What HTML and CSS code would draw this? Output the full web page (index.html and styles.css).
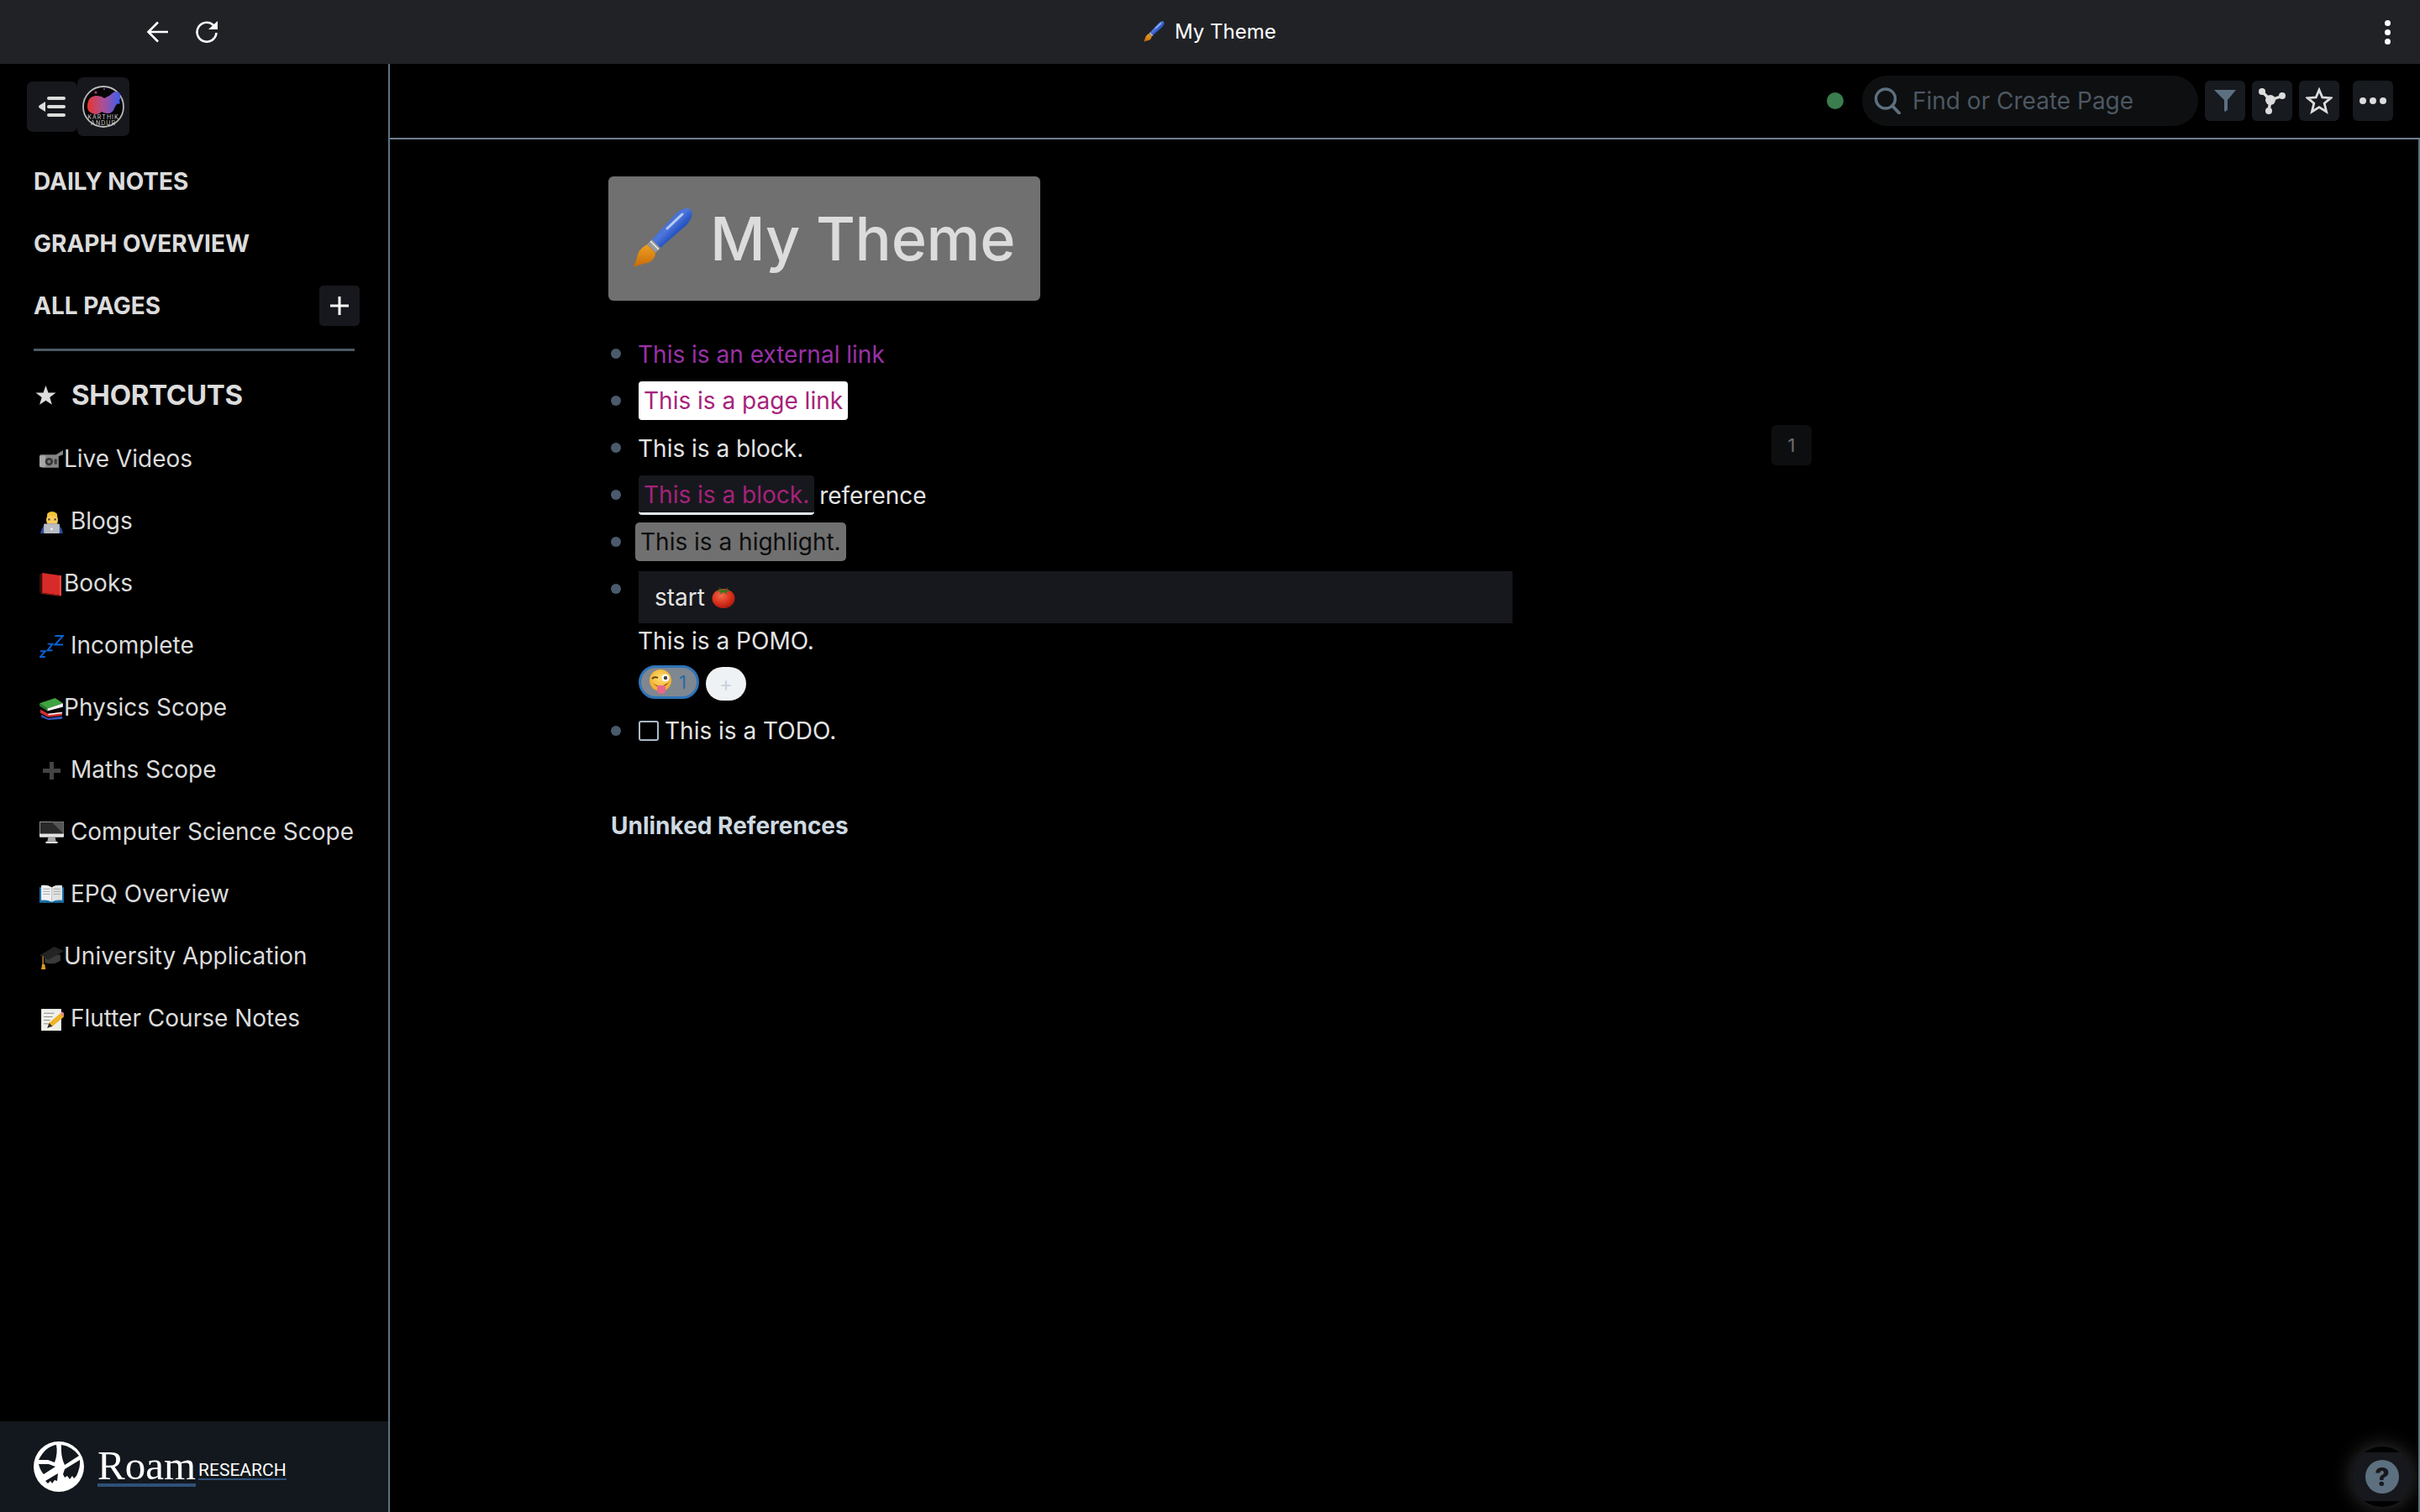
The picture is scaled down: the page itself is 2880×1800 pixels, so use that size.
FILE: index.html
```html
<!DOCTYPE html>
<html lang="en">
<head>
<meta charset="utf-8">
<title>My Theme</title>
<link rel="stylesheet" href="styles.css">
</head>
<body>
<svg class="defs" width="0" height="0" aria-hidden="true">
  <defs>
    <linearGradient id="g-handle" x1="0" y1="0" x2="1" y2="1">
      <stop offset="0" stop-color="#1d3fa8"/><stop offset=".45" stop-color="#4f78dc"/><stop offset=".6" stop-color="#2a56c4"/><stop offset="1" stop-color="#16368f"/>
    </linearGradient>
    <linearGradient id="g-tip" x1="0" y1="0" x2="0" y2="1">
      <stop offset="0" stop-color="#f0a020"/><stop offset="1" stop-color="#c86a08"/>
    </linearGradient>
    <radialGradient id="g-tomato" cx=".4" cy=".35" r=".7">
      <stop offset="0" stop-color="#f36a4a"/><stop offset=".6" stop-color="#d8301c"/><stop offset="1" stop-color="#a5180e"/>
    </radialGradient>
    <radialGradient id="g-face" cx=".5" cy=".4" r=".65">
      <stop offset="0" stop-color="#ffe070"/><stop offset="1" stop-color="#f0a420"/>
    </radialGradient>
    <linearGradient id="g-blob" x1="0" y1="0" x2="1" y2="0">
      <stop offset="0" stop-color="#e8352f"/><stop offset=".45" stop-color="#b04f90"/><stop offset="1" stop-color="#3f5df0"/>
    </linearGradient>

    <symbol id="e-brush" viewBox="0 0 70 72">
      <path d="M22 38 L46 12 Q56 0 65 1 Q71 3 69 11 Q66 20 56 27 L32 48 Z" fill="url(#g-handle)"/>
      <path d="M40 25 L58 8" stroke="#b8cbf5" stroke-width="3" stroke-linecap="round" fill="none"/>
      <path d="M21.800 38.200 L31.800 48.200 L26.200 53.800 L16.200 43.800 Z" fill="#9a9a9a"/>
      <path d="M20 40 L30 50" stroke="#eee" stroke-width="1.500"/>
      <path d="M16 44 Q6 50 5 56 Q3 64 0 71 Q10 67 17 66 Q26 62 26 54 Z" fill="url(#g-tip)"/>
    </symbol>
    <symbol id="e-camera" viewBox="0 0 28 26">
      <path d="M1 7 H19 L27 2 V7 L22 9 V22 H3 Q1 22 1 20 Z" fill="#858585"/>
      <rect x="0" y="8" width="7" height="13" fill="#a8a8a8"/>
      <circle cx="11" cy="15" r="4.500" fill="#333"/><circle cx="11" cy="15" r="2" fill="#777"/>
      <rect x="17" y="12" width="3" height="6" fill="#3b3b3b"/>
    </symbol>
    <symbol id="e-coder" viewBox="0 0 28 28">
      <path d="M9 4 Q14 0 20 4 L21 12 H8 Z" fill="#f2c23a"/>
      <rect x="8" y="7" width="13" height="10" rx="4" fill="#fbcb5c"/>
      <path d="M1 27 Q3 17 10 16 H18 Q25 17 27 27 Z" fill="#2a4fa0"/>
      <rect x="5" y="16" width="18" height="11" rx="1" fill="#b9bcc2"/>
      <circle cx="14" cy="22" r="1.200" fill="#fff"/>
      <rect x="10" y="10" width="2" height="2" fill="#333"/><rect x="17" y="10" width="2" height="2" fill="#333"/>
    </symbol>
    <symbol id="e-book" viewBox="0 0 28 28">
      <path d="M3 1 L25 4 V27 L3 24 Z" fill="#d62b28"/>
      <path d="M3 1 L0 3 V24 L3 24 Z" fill="#3a0d0d"/>
      <path d="M3 24 L25 27 L24 28 L1 25 Z" fill="#7e1413"/>
      <path d="M23 4 H25 V27 H23 Z" fill="#f24a43"/>
    </symbol>
    <symbol id="e-zzz" viewBox="0 0 30 30">
      <g fill="none" stroke="#0a63d6" stroke-width="2">
        <path d="M19 2 H29 L19 13 H29"/>
        <path d="M10 12 H16 L10 20 H16"/>
        <path d="M1 21 H7 L1 28 H7"/>
      </g>
    </symbol>
    <symbol id="e-books" viewBox="0 0 28 26">
      <path d="M2 20 L10 24 L26 22 V25 L10 26 L2 23 Z" fill="#3457c0"/>
      <path d="M1 14 L10 19 L26 17 V21 L10 23 L1 18 Z" fill="#d13030"/>
      <path d="M10 19 L26 17 V18.500 L10 20.500 Z" fill="#fff"/>
      <path d="M0 7 L18 1 L27 7 L9 13 Z" fill="#3fa33f"/>
      <path d="M9 13 L27 7 V11 L9 16 Z" fill="#f4f4f4"/>
      <path d="M0 7 L9 13 V16 L0 10 Z" fill="#2a7a2a"/>
    </symbol>
    <symbol id="e-plus" viewBox="0 0 29 29">
      <path d="M12 4 H17 V12 H25 V17 H17 V25 H12 V17 H4 V12 H12 Z" fill="#444"/>
    </symbol>
    <symbol id="e-monitor" viewBox="0 0 28 26">
      <rect x="0" y="0" width="28" height="18" rx="1" fill="#e4e4e4"/>
      <path d="M0.500 .5 H27.500 V14 H0.500 Z" fill="#2a2a2a"/>
      <path d="M14 .5 H27.500 V14 Z" fill="#555"/>
      <path d="M10 18 H18 L19 23 H9 Z" fill="#a8a8a8"/>
      <rect x="7" y="23" width="14" height="2" rx="1" fill="#ddd"/>
    </symbol>
    <symbol id="e-openbook" viewBox="0 0 28 24">
      <path d="M0 3 H13 L14 5 L15 3 H28 V21 H0 Z" fill="#1b6fa8"/>
      <path d="M2 1 Q9 0 14 3 V20 Q9 17 2 18 Z" fill="#f2f2f2"/>
      <path d="M26 1 Q19 0 14 3 V20 Q19 17 26 18 Z" fill="#e2e2e2"/>
      <path d="M4 5 H12 M4 8 H12 M4 11 H12 M16 5 H24 M16 8 H24 M16 11 H24" stroke="#9a9a9a" stroke-width=".8"/>
    </symbol>
    <symbol id="e-cap" viewBox="0 0 28 28">
      <path d="M6 12 V20 Q15 24 24 18 V11 Z" fill="#3a3a3a"/>
      <path d="M0 12 L17 2 L28 7 L10 17 Z" fill="#242424"/>
      <path d="M4 13 V22" stroke="#c98a22" stroke-width="1.400"/>
      <path d="M3 22 H6 L7 28 H2 Z" fill="#dd9a2a"/>
    </symbol>
    <symbol id="e-memo" viewBox="0 0 28 28">
      <rect x="2" y="2" width="23" height="25" fill="#f0f0ea"/>
      <path d="M5 7 H17 M5 11 H15 M5 15 H12 M5 19 H10" stroke="#8a8a8a" stroke-width="1"/>
      <path d="M9 24 L11 18 L24 7 L28 11 L15 22 Z" fill="#f0b428"/>
      <path d="M24 7 L26 5 L28 7 L28 11 Z" fill="#e88a96"/>
      <path d="M9 24 L11 18 L15 22 Z" fill="#333"/>
    </symbol>
    <symbol id="e-tomato" viewBox="0 0 28 26">
      <ellipse cx="14" cy="14.500" rx="13.500" ry="11.500" fill="url(#g-tomato)"/>
      <path d="M14 5 L8 1 L11 5 L5 5 L11 7 L9 10 L14 7 L19 10 L17 7 L23 5 L17 5 L20 1 Z" fill="#2f7a1f"/>
    </symbol>
    <symbol id="e-wink" viewBox="0 0 28 30">
      <circle cx="14" cy="13" r="13" fill="url(#g-face)"/>
      <path d="M4 11 Q7 8 11 10" fill="none" stroke="#5a3a10" stroke-width="1.800"/>
      <circle cx="20" cy="10" r="4.500" fill="#fff"/><circle cx="20" cy="10" r="2.200" fill="#444"/>
      <path d="M5 16 Q14 24 24 15 Q20 21 14 21 Q9 21 5 16 Z" fill="#6a3a14"/>
      <path d="M10 19 H20 V25 Q20 29 15 29 Q10 29 10 25 Z" fill="#e8688c"/>
    </symbol>
  </defs>
</svg>

<div class="app">
  <header class="titlebar">
    <div class="nav-icons">
      <svg class="nav-icon" viewBox="0 0 28 28"><path d="M26 14 H3 M14 2.500 L2.500 14 L14 25.500" fill="none" stroke="#fff" stroke-width="2.600"/></svg>
      <svg class="nav-icon" viewBox="0 0 28 28"><path d="M23 7 A11.500 11.500 0 1 0 25.500 15" fill="none" stroke="#fff" stroke-width="2.600"/><path d="M27 1 V11 H16 Z" fill="#fff"/></svg>
    </div>
    <div class="tab-title">
      <svg class="tab-emoji"><use href="#e-brush"/></svg>
      <span>My Theme</span>
    </div>
    <div class="kebab"><i></i><i></i><i></i></div>
  </header>

  <div class="body">
    <aside class="sidebar">
      <div class="side-top">
        <div class="toggle">
          <svg viewBox="0 0 32 24" class="toggle-icon"><path d="M0 12 Q0 11 1.500 10 L8 6 V18 L1.500 14 Q0 13 0 12 Z" fill="#dcdcdc"/><rect x="10" y="0" width="22" height="4" rx="2" fill="#dcdcdc"/><rect x="10" y="10" width="22" height="4" rx="2" fill="#dcdcdc"/><rect x="10" y="20" width="22" height="4" rx="2" fill="#dcdcdc"/></svg>
        </div>
        <div class="avatar-btn">
          <svg class="avatar" viewBox="0 0 50 50">
            <circle cx="25" cy="25" r="24" fill="#050505" stroke="#b8b8b8" stroke-width="1.800"/>
            <path d="M6 25 Q6 13 16 12 Q23 12 26 15 Q33 12 37 8 Q42 5 45 10 Q46 17 42 21 Q39 24 38 27 Q36 33 30 33 Q26 33 23 31 Q18 36 12 33 Q6 31 6 25 Z" fill="url(#g-blob)"/>
            <circle cx="16" cy="8" r="1.600" fill="#b03a80"/><circle cx="26" cy="4" r="1" fill="#9a48b0"/><circle cx="43" cy="20" r="1.800" fill="#3f5df0"/>
            <text x="25" y="40" class="avatar-text">KARTHIK</text>
            <text x="25" y="47" class="avatar-text">ANDUR</text>
          </svg>
        </div>
      </div>

      <nav class="side-nav">
        <div class="side-link">DAILY NOTES</div>
        <div class="side-link">GRAPH OVERVIEW</div>
        <div class="side-link side-link-action">
          <span>ALL PAGES</span>
          <span class="add-btn"><svg viewBox="0 0 24 24" class="add-icon"><path d="M12 1 V23 M1 12 H23" stroke="#fff" stroke-width="3"/></svg></span>
        </div>
      </nav>
      <div class="side-rule"></div>

      <div class="shortcuts-head">
        <svg viewBox="0 0 26 26" class="head-star"><path d="M13 1 L16.100 9.800 L25.500 10 L18 15.700 L20.700 24.800 L13 19.400 L5.300 24.800 L8 15.700 L0.500 10 L9.900 9.800 Z" fill="#dcdcdc"/></svg>
        <span>SHORTCUTS</span>
      </div>

      <ul class="shortcuts">
        <li><svg class="em"><use href="#e-camera"/></svg>Live Videos</li>
        <li><svg class="em"><use href="#e-coder"/></svg> Blogs</li>
        <li><svg class="em"><use href="#e-book"/></svg>Books</li>
        <li><svg class="em"><use href="#e-zzz"/></svg> Incomplete</li>
        <li><svg class="em"><use href="#e-books"/></svg>Physics Scope</li>
        <li><svg class="em"><use href="#e-plus"/></svg> Maths Scope</li>
        <li><svg class="em"><use href="#e-monitor"/></svg> Computer Science Scope</li>
        <li><svg class="em"><use href="#e-openbook"/></svg> EPQ Overview</li>
        <li><svg class="em"><use href="#e-cap"/></svg>University Application</li>
        <li><svg class="em"><use href="#e-memo"/></svg> Flutter Course Notes</li>
      </ul>

      <footer class="side-foot">
        <svg class="roam-logo" viewBox="0 0 60 60">
          <circle cx="30" cy="30" r="30" fill="#fff"/>
          <path d="M27 4 Q14 6 6 22 L17 22 L25 25 Q29 14 27 4 Z" fill="#12181d"/>
          <path d="M33 4 Q46 6 54 17 L37 28 Q32 18 33 4 Z" fill="#12181d"/>
          <path d="M6 27 L18 27 L26 30 L12 39 Q8 35 6 27 Z" fill="#12181d"/>
          <path d="M37 33 L55 22 Q56 30 51 41 L48 44 L46 41 L43 45 L40 41 L37 43 L35 39 Z" fill="#12181d"/>
          <path d="M29 38 L14 47 L17 50 L20 47 L22 50 L25 46 L28 47 Z" fill="#12181d"/>
        </svg>
        <div class="roam-word"><span class="roam">Roam</span><span class="research">RESEARCH</span></div>
      </footer>
    </aside>

    <main class="main">
      <div class="main-head">
        <span class="status-dot"></span>
        <div class="search">
          <svg viewBox="0 0 32 32" class="search-icon"><circle cx="14" cy="13.500" r="11.500" fill="none" stroke="#5c7080" stroke-width="3.400"/><path d="M22 22 L30 30.500" stroke="#5c7080" stroke-width="4" stroke-linecap="round"/></svg>
          <span>Find or Create Page</span>
        </div>
        <div class="tool-group">
          <span class="tool"><svg viewBox="0 0 32 32" class="tool-icon"><path d="M3 3 H29 L19 15 V27 L16 29 Q15 29 15 27 V15 Z" fill="#5c7080"/></svg></span>
          <span class="tool"><svg viewBox="0 0 32 32" class="tool-icon"><path d="M4 5 L14 15 L29 10 M14 15 L12 28" fill="none" stroke="#dcdcdc" stroke-width="3.400"/><circle cx="4" cy="5" r="4" fill="#dcdcdc"/><circle cx="28" cy="10" r="4" fill="#dcdcdc"/><circle cx="12" cy="28" r="4" fill="#dcdcdc"/><circle cx="14" cy="15" r="6" fill="#dcdcdc"/></svg></span>
          <span class="tool"><svg viewBox="0 0 32 32" class="tool-icon"><path d="M16 3 L19.800 12 L29.800 12.700 L22.200 19 L24.600 29 L16 23.600 L7.400 29 L9.800 19 L2.200 12.700 L12.200 12 Z" fill="none" stroke="#dcdcdc" stroke-width="2.800"/></svg></span>
          <span class="tool tool-more"><i></i><i></i><i></i></span>
        </div>
      </div>

      <div class="content">
        <h1 class="page-title"><svg class="title-emoji"><use href="#e-brush"/></svg><span>My Theme</span></h1>

        <ul class="blocks">
          <li class="block"><span class="plain ext-link">This is an external link</span></li>
          <li class="block"><span class="page-link">This is a page link</span></li>
          <li class="block"><span class="plain">This is a block.</span></li>
          <li class="block"><span class="block-ref">This is a block.</span> reference</li>
          <li class="block block-hl"><span class="highlight">This is a highlight.</span></li>
          <li class="block block-pomo">
            <div class="pomo-btn">start <svg class="tomato"><use href="#e-tomato"/></svg></div>
            <div class="pomo-text">This is a POMO.</div>
            <div class="reactions">
              <span class="reaction"><svg class="wink"><use href="#e-wink"/></svg><span class="count">1</span></span>
              <span class="react-add">+</span>
            </div>
          </li>
          <li class="block block-todo"><span class="check"></span><span>This is a TODO.</span></li>
        </ul>

        <div class="unlinked">Unlinked References</div>

        <div class="page-num">1</div>
        <div class="help"><div class="help-band"><span class="help-q">?</span></div></div>
      </div>
    </main>
  </div>
</div>
</body>
</html>
```

FILE: styles.css
```css
* { box-sizing: border-box; }
html, body { margin: 0; padding: 0; height: 100%; }
body { background: #000; color: #dcdcdc; font-family: Inter, "Liberation Sans", sans-serif; overflow: hidden; }
.defs { position: absolute; }
.app { display: flex; flex-direction: column; width: 2880px; height: 1800px; }

/* browser bar */
.titlebar { position: relative; flex: 0 0 76px; background: #212226; display: flex; align-items: center; justify-content: space-between; padding: 0 35px 0 174px; }
.nav-icons { display: flex; gap: 30px; }
.nav-icon { width: 28px; height: 28px; display: block; }
.tab-title { position: absolute; left: 1361px; top: 0; height: 75px; display: flex; align-items: center; gap: 12px; color: #fff; font-size: 24px; }
.tab-emoji { width: 25px; height: 25px; }
.kebab { display: flex; flex-direction: column; gap: 4px; }
.kebab i { width: 7px; height: 7px; border-radius: 50%; background: #fff; }

.body { flex: 1; display: flex; min-height: 0; }

/* sidebar */
.sidebar { flex: 0 0 464px; border-right: 2px solid #5c7080; display: flex; flex-direction: column; }
.side-top { display: flex; align-items: center; padding: 16px 0 17px 32px; }
.toggle { width: 60px; height: 60px; background: #17181d; border-radius: 7px; display: flex; align-items: center; justify-content: center; }
.toggle-icon { width: 32px; height: 24px; }
.avatar-btn { width: 62px; height: 70px; background: #17181d; border-radius: 7px; display: flex; align-items: center; justify-content: center; }
.avatar { width: 50px; height: 50px; }
.avatar-text { font-size: 7px; fill: #cfcfcf; text-anchor: middle; letter-spacing: 1px; font-family: Inter, sans-serif; }

.side-nav { display: flex; flex-direction: column; }
.side-link { height: 74px; display: flex; align-items: center; padding-left: 40px; font-size: 28px; font-weight: 700; color: #dcdcdc; }
.side-link-action { justify-content: space-between; padding-right: 34px; }
.add-btn { width: 48px; height: 48px; background: #17181d; border-radius: 5px; display: flex; align-items: center; justify-content: center; }
.add-icon { width: 24px; height: 24px; }
.side-rule { height: 3px; background: #4d5965; margin: 14px 40px 0; }

.shortcuts-head { display: flex; align-items: center; gap: 18px; height: 74px; margin-top: 15px; padding-left: 42px; font-size: 33px; font-weight: 700; color: #dcdcdc; letter-spacing: -0.3px; }
.head-star { width: 25px; height: 25px; }
.shortcuts { list-style: none; margin: 2px 0 0; padding: 0; }
.shortcuts li { height: 74px; line-height: 74px; padding-left: 47px; font-size: 28px; color: #dcdcdc; white-space: pre-wrap; }
.em { width: 29px; height: 29px; vertical-align: -6px; }

.side-foot { margin-top: auto; height: 108px; background: #12181d; display: flex; align-items: center; padding: 0 0 0 40px; gap: 16px; }
.roam-logo { width: 60px; height: 60px; flex: none; }
.roam-word { display: flex; align-items: flex-end; gap: 3px; color: #fff; margin-top: 1px; }
.roam { font-family: "Liberation Serif", serif; font-size: 49px; line-height: 43px; border-bottom: 4px solid #2f5078; }
.research { font-family: Roboto, sans-serif; font-size: 21px; line-height: 20px; border-bottom: 2px solid #2f5078; margin-bottom: 8px; }

/* main */
.main { flex: 1; display: flex; flex-direction: column; min-width: 0; }
.main-head { flex: 0 0 90px; border-bottom: 2px solid #6f7f90; display: flex; align-items: flex-start; padding: 14px 32px 0 0; justify-content: flex-end; }
.status-dot { width: 20px; height: 20px; border-radius: 50%; background: #3a7d4f; margin: 20px 22px 0 0; }
.search { width: 400px; height: 60px; border-radius: 30px; background: #0e0f10; display: flex; align-items: center; padding-left: 14px; gap: 14px; color: #4c5763; font-size: 28px; }
.search-icon { width: 32px; height: 32px; }
.tool-group { display: flex; gap: 8px; margin: 6px 0 0 8px; }
.tool { width: 48px; height: 48px; background: #171a1f; border-radius: 6px; display: flex; align-items: center; justify-content: center; }
.tool-icon { width: 32px; height: 32px; }
.tool-more { margin-left: 8px; gap: 4px; }
.tool-more i { width: 8px; height: 8px; border-radius: 50%; background: #dcdcdc; }

.content { position: relative; flex: 1; border-right: 2px solid #5c7080; padding: 44px 0 0 260px; }
.page-title { width: 514px; height: 148px; margin: 0; background: #707070; border-radius: 6px; display: flex; align-items: center; padding: 0 0 2px 30px; gap: 21px; font-size: 72px; font-weight: 500; color: #dcdcdc; letter-spacing: -0.3px; }
.title-emoji { width: 70px; height: 72px; flex: none; }

.blocks { list-style: none; margin: 36px 0 0; padding: 0 0 0 36px; width: 1076px; font-size: 28px; }
.block { position: relative; height: 56px; line-height: 56px; color: #e4e4e4; }
.block::before { content: ""; position: absolute; left: -33px; top: 21px; width: 12px; height: 12px; border-radius: 50%; background: #4a5a6c; }
.plain { margin-left: -1px; }
.ext-link { color: #9b30a8; }
.page-link { display: inline-block; height: 46px; line-height: 47px; padding: 0 6px; background: #fff; color: #a6227a; border-radius: 4px; vertical-align: top; margin-top: 4px; }
.block-ref { display: inline-block; height: 47px; line-height: 47px; padding: 0 6px; background: #17181d; color: #a6227a; border-bottom: 3px solid #e0e6ea; border-radius: 4px; vertical-align: top; margin: 4px -2px 0 0; }
.block-hl { margin-left: -4px; }
.block-hl::before { left: -29px; }
.highlight { display: inline-block; height: 46px; line-height: 46px; padding: 0 6px; background: #707070; color: #0c0c0c; border-radius: 5px; vertical-align: top; margin-top: 4px; }
.block-pomo { height: auto; line-height: normal; padding-top: 6px; }
.block-pomo::before { top: 21px; }
.pomo-btn { height: 62px; background: #17181d; padding-left: 19px; line-height: 62px; width: 1040px; white-space: pre-wrap; }
.tomato { width: 28px; height: 26px; vertical-align: -3px; }
.pomo-text { height: 42px; line-height: 42px; margin-left: -1px; }
.reactions { display: flex; align-items: flex-start; gap: 8px; height: 50px; margin-top: 8px; }
.reaction { width: 72px; height: 40px; border-radius: 20px; background: #7f8790; border: 3px solid #2f74b8; display: flex; align-items: center; padding-left: 9px; gap: 8px; }
.wink { width: 28px; height: 30px; }
.count { color: #2868a8; font-size: 22px; }
.react-add { width: 48px; height: 40px; margin-top: 2px; border-radius: 20px; background: #eef2f5; color: #c9d1d8; font-size: 24px; line-height: 42px; text-align: center; }
.block-todo { display: flex; align-items: center; gap: 7px; height: 48px; line-height: 48px; margin-top: 4px; }
.block-todo::before { top: 18px; }
.check { width: 24px; height: 24px; border: 2px solid #a9bac8; border-radius: 3px; }

.unlinked { margin: 69px 0 0 3px; font-size: 28px; font-weight: 700; color: #ced9e0; line-height: 40px; }

.page-num { position: absolute; left: 1644px; top: 340px; width: 48px; height: 48px; background: #0d0e10; border-radius: 6px; color: #6e6e6e; font-size: 22px; line-height: 48px; text-align: center; }
.help { position: absolute; right: 7px; bottom: 6px; width: 72px; height: 72px; border-radius: 50%; background: #000; overflow: hidden; display: flex; align-items: center; box-shadow: 0 0 24px rgba(255,255,255,.22); }
.help-band { width: 100%; height: 58px; background: #17181d; display: flex; align-items: center; justify-content: center; }
.help-q { width: 40px; height: 40px; border-radius: 50%; background: #5c7080; color: #17181d; font-size: 30px; font-weight: 800; line-height: 40px; text-align: center; }
```
